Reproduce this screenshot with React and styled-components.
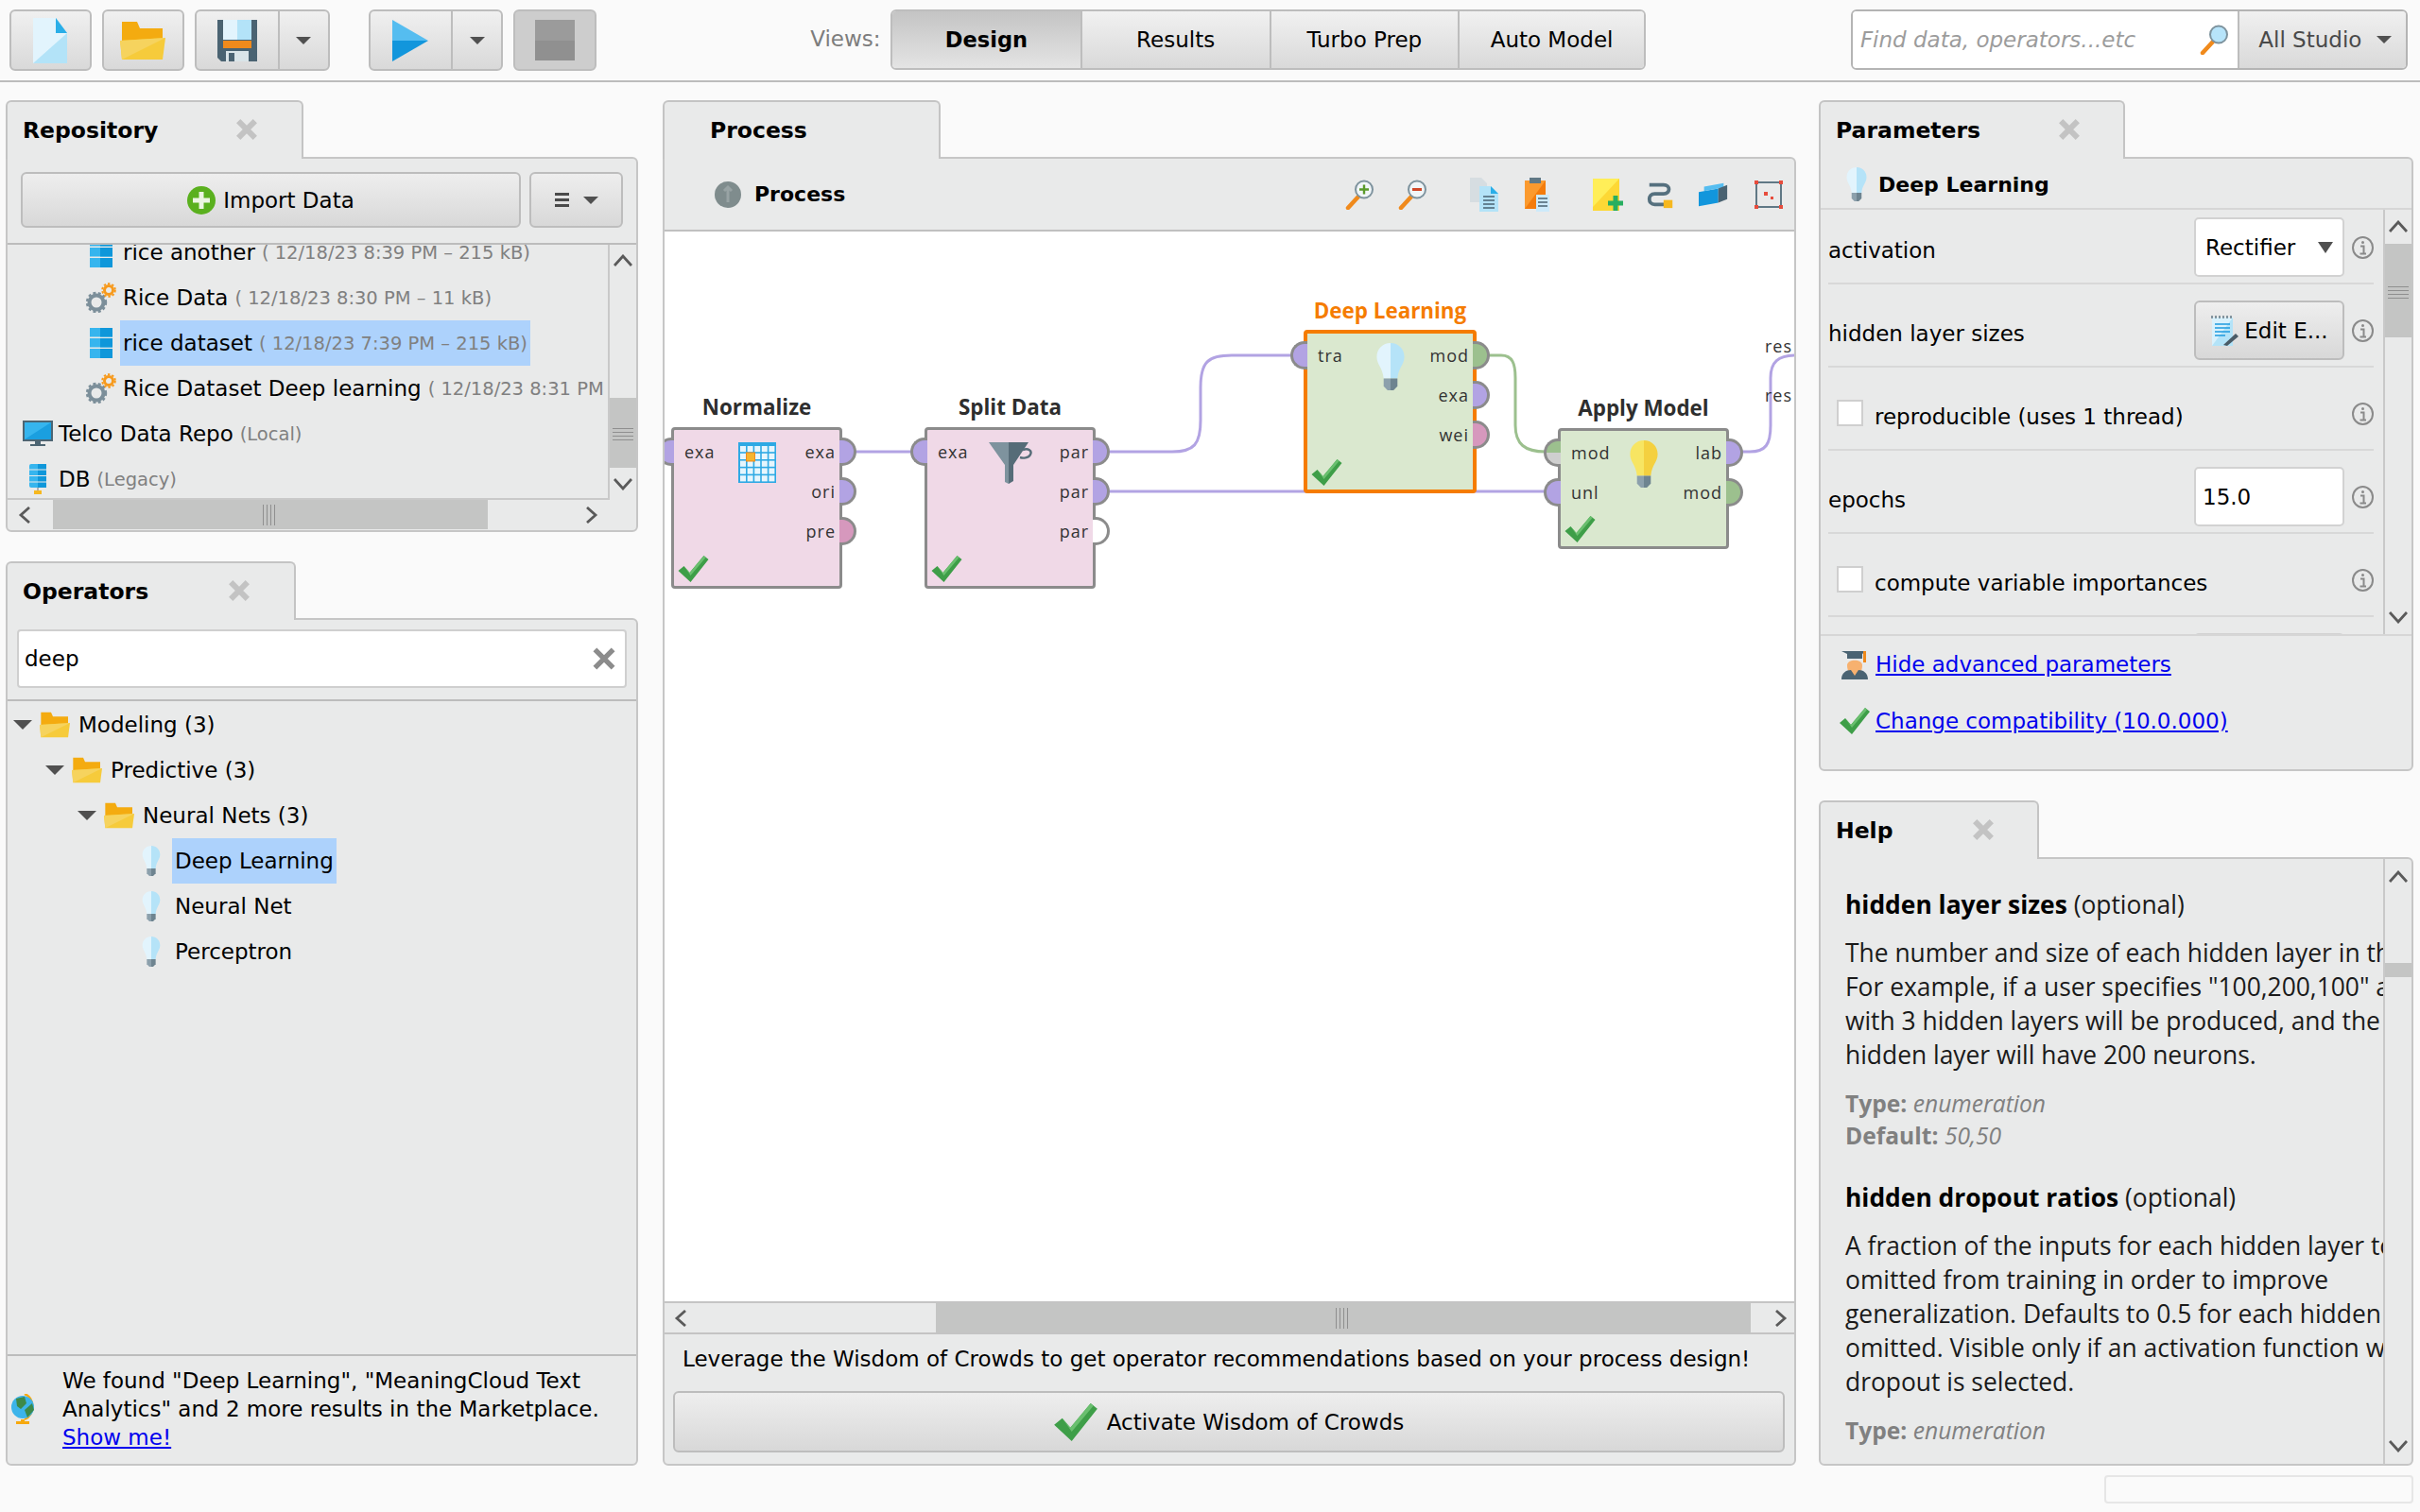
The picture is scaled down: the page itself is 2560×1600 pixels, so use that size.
import styled, { createGlobalStyle } from "styled-components";

const Global = createGlobalStyle`
  html, body { margin: 0; padding: 0; background: #fafafa; }
  #root { height: 1600px; overflow: hidden; }
  * { box-sizing: border-box; }
`;

const UI = `"DejaVu Sans", "Liberation Sans", sans-serif`;
const HELP = `"Open Sans", "DejaVu Sans", sans-serif`;

const Page = styled.div`
  display: flex;
  flex-direction: column;
  height: 1600px;
  font-family: ${UI};
  font-size: 23px;
  color: #000;
`;

/* ---------- toolbar ---------- */
const Toolbar = styled.div`
  display: flex;
  align-items: flex-start;
  height: 87px;
  flex-shrink: 0;
  padding: 10px 13px 0 10px;
  border-bottom: 2px solid #bcbcbc;
`;
const ToolGroup = styled.div`
  display: flex;
  margin-left: ${(p) => p.$gap || 0}px;
  height: 65px;
  border: 2px solid #bdbdbd;
  border-radius: 6px;
  overflow: hidden;
  background: ${(p) => (p.$disabled ? "#cdcdcd" : "linear-gradient(#f0f0f0, #d9d9d9)")};
`;
const ToolCell = styled.div`
  display: flex;
  align-items: center;
  justify-content: center;
  width: ${(p) => p.$w}px;
  & + & { border-left: 2px solid #bdbdbd; }
`;
const Caret = styled.span`
  display: inline-block;
  width: 0;
  height: 0;
  margin-left: ${(p) => p.$ml || 0}px;
  border-left: ${(p) => p.$s || 8}px solid transparent;
  border-right: ${(p) => p.$s || 8}px solid transparent;
  border-top: ${(p) => p.$tall || p.$s || 8}px solid #505050;
  flex-shrink: 0;
`;
const ViewsLabel = styled.span`
  margin-left: 226px;
  width: 85px;
  line-height: 62px;
  color: #7d7d7d;
`;
const ViewTabs = styled.div`
  display: flex;
  height: 64px;
  border: 2px solid #bdbdbd;
  border-radius: 6px;
  overflow: hidden;
`;
const ViewTab = styled.div`
  display: flex;
  align-items: center;
  justify-content: center;
  width: ${(p) => p.$w || 200}px;
  font-weight: ${(p) => (p.$active ? 700 : 400)};
  font-size: ${(p) => (p.$active ? "22.5px" : "23px")};
  background: ${(p) => (p.$active ? "linear-gradient(#c4c4c4, #e4e4e4)" : "linear-gradient(#f1f1f1, #d9d9d9)")};
  & + & { border-left: 2px solid #bdbdbd; }
`;
const SearchBox = styled.div`
  display: flex;
  margin-left: 217px;
  height: 64px;
  border: 2px solid #b4b4b4;
  border-radius: 6px;
  overflow: hidden;
`;
const SearchInput = styled.div`
  display: flex;
  align-items: center;
  justify-content: space-between;
  width: 408px;
  padding: 0 10px 0 8px;
  background: #fff;
  font-style: italic;
  color: #9c9c9c;
`;
const ScopeButton = styled.div`
  display: flex;
  align-items: center;
  width: 178px;
  padding-left: 20px;
  border-left: 2px solid #bdbdbd;
  color: #4a4a4a;
  background: linear-gradient(#f0f0f0, #d9d9d9);
`;

/* ---------- docks ---------- */
const Main = styled.div`
  display: flex;
  height: 1464px;
  padding: 19px 0 0 6px;
  flex-shrink: 0;
`;
const Column = styled.div`
  display: flex;
  flex-direction: column;
  width: ${(p) => p.$w}px;
  margin-left: ${(p) => p.$ml || 0}px;
  flex-shrink: 0;
`;
const Dock = styled.div`
  display: flex;
  flex-direction: column;
  min-height: 0;
  margin-top: ${(p) => p.$mt || 0}px;
  height: ${(p) => (p.$h ? `${p.$h}px` : "auto")};
  flex: ${(p) => (p.$h ? "none" : 1)};
`;
const Tab = styled.div`
  position: relative;
  z-index: 1;
  display: flex;
  align-items: center;
  width: ${(p) => p.$w}px;
  height: 62px;
  margin-bottom: -2px;
  padding: 0 0 0 ${(p) => p.$pl || 16}px;
  flex-shrink: 0;
  background: #e9eaea;
  border: 2px solid #c4c4c4;
  border-bottom: none;
  border-radius: 6px 6px 0 0;
  font-size: 23.5px;
  font-weight: 700;
`;
const TabClose = styled.span`
  position: absolute;
  left: ${(p) => p.$x}px;
  top: 18px;
  display: flex;
`;
const Panel = styled.div`
  display: flex;
  flex-direction: column;
  flex: 1;
  min-height: 0;
  background: #e9eaea;
  border: 2px solid #c6c6c6;
  border-radius: 0 6px 6px 6px;
  overflow: hidden;
`;
const Button = styled.div`
  display: flex;
  align-items: center;
  justify-content: center;
  gap: ${(p) => p.$gap || 8}px;
  height: ${(p) => p.$h || 59}px;
  width: ${(p) => (p.$w ? `${p.$w}px` : "auto")};
  flex: ${(p) => (p.$w || p.$block ? "none" : 1)};
  background: linear-gradient(#eeeeee, #d8d8d8);
  border: 2px solid #bdbdbd;
  border-radius: 6px;
`;

/* ---------- scrollbars ---------- */
const VScroll = styled.div`
  display: flex;
  flex-direction: column;
  align-items: stretch;
  width: ${(p) => p.$w || 30}px;
  flex-shrink: 0;
  border-left: 2px solid #c9c9c9;
`;
const ArrowCell = styled.div`
  display: flex;
  align-items: center;
  justify-content: center;
  height: ${(p) => p.$h || 34}px;
  width: ${(p) => (p.$w ? `${p.$w}px` : "auto")};
  padding-left: ${(p) => p.$pl || 0}px;
  flex-shrink: 0;
`;
const VTrack = styled.div`
  flex: 1;
  min-height: 0;
`;
const VThumb = styled.div`
  display: flex;
  align-items: center;
  justify-content: center;
  margin-top: ${(p) => p.$top}px;
  height: ${(p) => p.$h}px;
  background: #c4c5c4;
`;
const HScroll = styled.div`
  display: flex;
  align-items: stretch;
  height: ${(p) => p.$h || 31}px;
  padding-right: ${(p) => p.$pr || 0}px;
  flex-shrink: 0;
`;
const HTrack = styled.div`
  flex: 1;
  padding-left: ${(p) => p.$left}px;
  padding-right: ${(p) => p.$right}px;
`;
const HThumb = styled.div`
  display: flex;
  align-items: center;
  justify-content: center;
  height: 100%;
  background: #c4c5c4;
`;
const Grip = styled.span`
  display: block;
  width: ${(p) => (p.$vertical ? "16px" : "22px")};
  height: ${(p) => (p.$vertical ? "22px" : "16px")};
  background: repeating-linear-gradient(
    ${(p) => (p.$vertical ? "90deg" : "0deg")},
    #8f8f8f 0 1px,
    transparent 1px 4px
  );
`;

/* ---------- repository ---------- */
const ImportBar = styled.div`
  display: flex;
  gap: 9px;
  padding: 14px 14px 16px;
  border-bottom: 2px solid #bcbcbc;
`;
const TreeArea = styled.div`
  display: flex;
  height: 270px;
  flex-shrink: 0;
`;
const TreeClip = styled.div`
  flex: 1;
  min-width: 0;
  overflow: hidden;
  white-space: nowrap;
  border-bottom: 2px solid #c9c9c9;
`;
const RepoList = styled.div`
  margin-top: -16px;
`;
const RepoRow = styled.div`
  display: flex;
  align-items: center;
  height: 48px;
  padding-left: ${(p) => p.$indent}px;
`;
const IconSlot = styled.span`
  display: flex;
  align-items: center;
  justify-content: center;
  width: ${(p) => p.$w}px;
  flex-shrink: 0;
`;
const FolderSlot = styled.span`
  display: flex;
  align-items: center;
  width: 49px;
  padding-left: 8px;
  flex-shrink: 0;
`;
const LeafSlot = styled.span`
  display: flex;
  align-items: center;
  width: 32px;
  flex-shrink: 0;
`;
const RowLabel = styled.span`
  display: inline-flex;
  align-items: center;
  height: 48px;
  padding: 0 3px;
  background: ${(p) => (p.$selected ? "#add2fc" : "transparent")};
`;
const Meta = styled.span`
  margin-left: 7px;
  font-size: 19.5px;
  color: #808080;
`;

/* ---------- operators ---------- */
const FilterBox = styled.div`
  display: flex;
  align-items: center;
  justify-content: space-between;
  height: 62px;
  margin: 10px 10px 12px;
  padding: 0 10px 0 6px;
  background: #fff;
  border: 2px solid #cfcfcf;
  border-radius: 4px;
`;
const OperatorTree = styled.div`
  flex: 1;
  padding-top: 1px;
  border-top: 2px solid #bcbcbc;
`;
const OpRow = styled.div`
  display: flex;
  align-items: center;
  height: 48px;
  padding-left: ${(p) => p.$indent}px;
`;
const Marketplace = styled.div`
  display: flex;
  align-items: center;
  height: 116px;
  flex-shrink: 0;
  padding: 0 0 2px 4px;
  border-top: 2px solid #bcbcbc;
`;
const MarketText = styled.div`
  margin-left: 28px;
  line-height: 30px;
  white-space: nowrap;
`;
const Anchor = styled.a`
  color: #0000ee;
  text-decoration: underline;
`;

/* ---------- process ---------- */
const ProcessBar = styled.div`
  display: flex;
  align-items: center;
  height: 77px;
  flex-shrink: 0;
  padding: 0 0 0 52px;
  border-bottom: 2px solid #c0c0c0;
  font-size: 22px;
  font-weight: 700;
`;
const ProcessName = styled.span`
  margin-left: 13px;
`;
const ProcessActions = styled.div`
  flex: 1;
  display: flex;
  justify-content: flex-end;
  align-items: center;
  padding-right: 11px;
`;
const ActionIcon = styled.span`
  display: flex;
  justify-content: center;
  width: 32px;
  margin-left: ${(p) => p.$gap || 24}px;
`;
const Canvas = styled.div`
  position: relative;
  flex: 1;
  min-height: 0;
  background: #fff;
  overflow: hidden;
  border-bottom: 2px solid #c4c4c4;
`;
const Wires = styled.svg`
  position: absolute;
  left: 0;
  top: 0;
`;
const Node = styled.div`
  position: absolute;
  left: ${(p) => p.$x}px;
  top: ${(p) => p.$y}px;
  width: ${(p) => p.$w}px;
  height: ${(p) => p.$h}px;
  display: flex;
  justify-content: space-between;
  background: ${(p) => (p.$tone === "green" ? "#dae8cf" : "#f0d9e7")};
  border: ${(p) => (p.$selected ? "4px solid #f57c00" : "3px solid #8b8b8b")};
  border-radius: 4px;
  font-family: ${HELP};
  font-size: 18px;
  color: #333;
`;
const NodeTitle = styled.div`
  position: absolute;
  left: -30px;
  right: -30px;
  top: -37px;
  text-align: center;
  font-size: 22.4px;
  font-weight: 700;
  line-height: 26px;
  white-space: nowrap;
  color: ${(p) => (p.$selected ? "#f57c00" : "#2e2e2e")};
`;
const NodeIcon = styled.span`
  position: absolute;
  left: 50%;
  top: ${(p) => p.$top}px;
  transform: translateX(-50%);
  display: flex;
`;
const NodeCheck = styled.span`
  position: absolute;
  left: 4px;
  bottom: 4px;
  display: flex;
`;
const PortColumn = styled.div`
  display: flex;
  flex-direction: column;
  gap: 12px;
  padding-top: 8px;
  align-items: ${(p) => (p.$right ? "flex-end" : "flex-start")};
`;
const PortRow = styled.div`
  position: relative;
  display: flex;
  align-items: center;
  height: 30px;
  padding: ${(p) => (p.$right ? "0 4px 0 0" : "0 0 0 11px")};
  letter-spacing: 1px;
  line-height: 1;
`;
const Port = styled.span`
  position: absolute;
  top: 0;
  width: 18px;
  height: 30px;
  background: ${(p) => p.$fill};
  border: 3px solid #8b8b8b;
  ${(p) =>
    p.$right
      ? `left: 100%; border-left: none; border-radius: 0 15px 15px 0;`
      : `right: 100%; border-right: none; border-radius: 15px 0 0 15px;`}
`;
const ResLabel = styled.span`
  position: absolute;
  right: 2px;
  top: ${(p) => p.$top}px;
  font-family: ${HELP};
  font-size: 18px;
  color: #333;
  letter-spacing: 1px;
  line-height: 24px;
`;
const CrowdsBar = styled.div`
  display: flex;
  flex-direction: column;
  flex-shrink: 0;
  height: 139px;
  border-top: 2px solid #c4c4c4;
  padding: 0 10px 0 9px;
`;
const CrowdsText = styled.div`
  height: 60px;
  padding-left: 10px;
  line-height: 52px;
  white-space: nowrap;
`;

/* ---------- parameters ---------- */
const OperatorHeader = styled.div`
  display: flex;
  align-items: center;
  height: 54px;
  flex-shrink: 0;
  padding: 2px 0 0 27px;
  border-bottom: 2px solid #d6d6d6;
  font-size: 22px;
  font-weight: 700;
`;
const OperatorName = styled.span`
  margin-left: 12px;
`;
const ParamBody = styled.div`
  display: flex;
  height: 451px;
  flex-shrink: 0;
  border-bottom: 2px solid #d6d6d6;
`;
const ParamClip = styled.div`
  flex: 1;
  min-width: 0;
  overflow: hidden;
`;
const ParamList = styled.div`
  margin-top: -9px;
`;
const ParamRow = styled.div`
  display: flex;
  align-items: flex-start;
  height: 88px;
  margin: 0 10px 0 8px;
  padding-top: 17px;
  border-bottom: 2px solid #d8d8d8;
`;
const ParamLabel = styled.div`
  flex: 1;
  height: 63px;
  line-height: 70px;
`;
const Combo = styled.div`
  display: flex;
  align-items: center;
  justify-content: space-between;
  width: 159px;
  height: 63px;
  padding: 0 10px;
  background: #fff;
  border: 2px solid #d2d2d2;
  border-radius: 5px;
`;
const NumberField = styled(Combo)`
  padding: 0 7px;
`;
const Info = styled.span`
  display: flex;
  align-items: center;
  width: 23px;
  height: 63px;
  margin-left: 8px;
  flex-shrink: 0;
`;
const CheckBox = styled.span`
  display: block;
  width: 28px;
  height: 28px;
  margin: 17px 12px 0 9px;
  background: #fff;
  border: 2px solid #cfcfcf;
`;
const LinkRow = styled.div`
  display: flex;
  align-items: center;
  height: 60px;
  padding-left: 20px;
`;
const LinkIcon = styled.span`
  display: flex;
  justify-content: center;
  width: 32px;
  margin-right: 6px;
`;

/* ---------- help ---------- */
const HelpBody = styled.div`
  display: flex;
  flex: 1;
  min-height: 0;
`;
const HelpClip = styled.div`
  flex: 1;
  min-width: 0;
  overflow: hidden;
  padding: 30px 0 0 26px;
  font-family: ${HELP};
  font-size: 26.4px;
  white-space: nowrap;
  color: #1a1a1a;
`;
const HelpHeading = styled.div`
  line-height: 36px;
  margin-top: ${(p) => p.$mt || 0}px;
  b { color: #000; }
`;
const HelpPara = styled.div`
  margin-top: 15px;
  line-height: 36px;
`;
const HelpMeta = styled.div`
  margin-top: 17px;
  font-size: 24.6px;
  line-height: 34px;
  color: #808080;
  b { font-weight: 700; }
  i { font-style: italic; }
`;
const StatusRow = styled.div`
  display: flex;
  justify-content: flex-end;
  padding: 10px 7px 0 0;
`;
const StatusBox = styled.div`
  width: 327px;
  height: 30px;
  border: 2px solid #e6e6e6;
  border-radius: 4px;
`;

/* ---------- drawings ---------- */
const Chevron = ({ dir }) => {
  const paths = {
    up: "M1 12 L10 2 L19 12",
    down: "M1 2 L10 12 L19 2",
    left: "M12 1 L3 9 L12 17",
    right: "M3 1 L12 9 L3 17",
  };
  const vertical = dir === "up" || dir === "down";
  return (
    <svg width={vertical ? 20 : 15} height={vertical ? 14 : 18} fill="none" stroke="#5a5a5a" strokeWidth="2.8">
      <path d={paths[dir]} />
    </svg>
  );
};

const CloseX = ({ size = 22, color = "#c3c3c3", sw = 5.5 }) => (
  <svg width={size} height={size} viewBox="0 0 20 20" stroke={color} strokeWidth={sw}>
    <path d="M2 2 L18 18 M18 2 L2 18" />
  </svg>
);

const NewFile = () => (
  <svg width="36" height="48" viewBox="0 0 36 48">
    <path d="M0 0 H24 L36 16 V48 H0 Z" fill="#b3e3f8" />
    <path d="M0 0 H24 V16 H36 L0 48 Z" fill="#e2f4fd" />
    <path d="M24 0 L36 16 H24 Z" fill="#29aee8" />
  </svg>
);

const OpenFolder = ({ w = 48, h = 40 }) => (
  <svg width={w} height={h} viewBox="0 0 48 40">
    <path d="M2 0 H18 L21 7 H45 V24 H2 Z" fill="#f4ab10" />
    <path d="M0 20 L48 17 L45 40 H2 Z" fill="#f6cb3b" />
    <path d="M0 20 L48 17 L2 40 Z" fill="#f6d35e" />
  </svg>
);

const Floppy = () => (
  <svg width="42" height="44" viewBox="0 0 42 44">
    <path d="M0 0 H42 V44 H4 L0 40 Z" fill="#4a6372" />
    <rect x="6" y="0" width="15" height="21" fill="#e2f4fd" />
    <rect x="21" y="0" width="15" height="21" fill="#b3e3f8" />
    <rect x="6" y="22" width="30" height="8" fill="#f08a1c" />
    <rect x="9" y="33" width="24" height="11" fill="#d9e4e8" />
    <rect x="12" y="35" width="6" height="9" fill="#4a6372" />
  </svg>
);

const Play = () => (
  <svg width="38" height="44" viewBox="0 0 38 44">
    <path d="M0 0 L38 22 H0 Z" fill="#55bdf0" />
    <path d="M0 44 L38 22 H0 Z" fill="#1296dc" />
  </svg>
);

const Stop = () => (
  <svg width="42" height="43" viewBox="0 0 42 43">
    <rect width="42" height="22" fill="#9b9b9b" />
    <rect y="22" width="42" height="21" fill="#909090" />
  </svg>
);

const Magnifier = ({ mark, fill = "#f1f6f8" }) => (
  <svg width="30" height="32" viewBox="0 0 30 32">
    <path d="M14 18 L3 30" stroke="#f08a1c" strokeWidth="4.5" strokeLinecap="round" />
    <circle cx="20" cy="10.5" r="9" fill={fill} stroke="#7e939e" strokeWidth="2" />
    {mark === "plus" && <path d="M20 5.5 V15.5 M15 10.5 H25" stroke="#5a9a2a" strokeWidth="2.4" />}
    {mark === "minus" && <path d="M15 10.5 H25" stroke="#d1492a" strokeWidth="3" />}
  </svg>
);

const PlusBadge = () => (
  <svg width="30" height="30" viewBox="0 0 30 30">
    <ellipse cx="15" cy="15" rx="15" ry="15" fill="#5ab01e" />
    <path d="M15 6 V24 M6 15 H24" stroke="#ecf5e2" strokeWidth="5" />
  </svg>
);

const Check = ({ w = 33, h = 28 }) => (
  <svg width={w} height={h} viewBox="0 0 32 28">
    <path d="M0 16 L6 11 L12 18 L27 0 L32 4 L13 28 Z" fill="#3e9e48" />
    <path d="M6 11 L12 18 L27 0 L29 2 L13 21 Z" fill="#6abf6f" />
  </svg>
);

const Bulb = ({ w = 28, h = 48, left = "#e2f4fd", right = "#b5e3f8" }) => (
  <svg width={w} height={h} viewBox="0 0 28 48">
    <path d="M14 0 C6 0 0 6 0 14 C0 22 6 25 7 36 H14 Z" fill={left} />
    <path d="M14 0 C22 0 28 6 28 14 C28 22 22 25 21 36 H14 Z" fill={right} />
    <path d="M7 36 H14 V48 H11 L7 44 Z" fill="#8ca0ac" />
    <path d="M21 36 H14 V48 H17 L21 44 Z" fill="#6e8490" />
  </svg>
);

const DataStack = ({ h = 32 }) => (
  <svg width="24" height={h} viewBox="0 0 24 32">
    <rect width="24" height="9.5" fill="#36b5ee" />
    <rect y="11" width="24" height="9.5" fill="#36b5ee" />
    <rect y="22" width="24" height="10" fill="#36b5ee" />
    <rect x="11" width="13" height="9.5" fill="#0f97da" />
    <rect x="11" y="11" width="13" height="9.5" fill="#0f97da" />
    <rect y="22" x="11" width="13" height="10" fill="#0f97da" />
  </svg>
);

const Gears = () => (
  <svg width="32" height="32" viewBox="0 0 32 32">
    <circle cx="11" cy="21" r="7.5" fill="none" stroke="#7c8f9a" strokeWidth="4" />
    <circle cx="11" cy="21" r="10" fill="none" stroke="#7c8f9a" strokeWidth="2.4" strokeDasharray="3 2.4" />
    <circle cx="24" cy="8" r="4.5" fill="none" stroke="#f79a1d" strokeWidth="3" />
    <circle cx="24" cy="8" r="6.8" fill="none" stroke="#f79a1d" strokeWidth="2" strokeDasharray="2.4 2" />
  </svg>
);

const Monitor = () => (
  <svg width="32" height="28" viewBox="0 0 32 28">
    <rect width="32" height="22" fill="#4d6573" />
    <rect x="2" y="2" width="28" height="18" fill="#1a9fe0" />
    <path d="M2 2 H30 L2 20 Z" fill="#36b5ee" />
    <rect x="13" y="22" width="6" height="3" fill="#4d6573" />
    <rect x="8" y="25" width="16" height="2" fill="#4d6573" />
  </svg>
);

const DbIcon = () => (
  <svg width="18" height="32" viewBox="0 0 18 32">
    <rect width="18" height="25" rx="2" fill="#36b5ee" />
    <rect x="9" width="9" height="25" fill="#0f97da" />
    <path d="M0 6 H18 M0 12.5 H18 M0 19 H18" stroke="#e9eaea" />
    <rect x="8.5" y="25" width="1" height="4" fill="#777" />
    <rect x="5" y="28" width="8" height="4" fill="#f6b81f" />
  </svg>
);

const Globe = () => (
  <svg width="26" height="32" viewBox="0 0 26 32">
    <path d="M14 0 C25 4 25 22 14 27" fill="none" stroke="#f6a90e" strokeWidth="2.4" />
    <circle cx="12" cy="14" r="12" fill="#3cb4ea" />
    <path d="M5 5 L14 3 L16 10 L10 16 L6 13 Z M14 17 L22 10 L24 17 L17 25 Z" fill="#3d8a4a" />
    <rect x="10" y="27" width="4" height="2" fill="#f6a90e" />
    <rect x="5" y="29" width="14" height="3" fill="#f6a90e" />
  </svg>
);

const InfoGlyph = () => (
  <svg width="23" height="24" viewBox="0 0 23 24" fill="none" stroke="#8a8a8a">
    <ellipse cx="11.5" cy="12" rx="10.5" ry="11" strokeWidth="2" />
    <circle cx="11.5" cy="6.5" r="1.5" fill="#8a8a8a" stroke="none" />
    <path d="M9 10.5 H12.5 V18 M8.5 18.5 H15" strokeWidth="2" />
  </svg>
);

const Notepad = () => (
  <svg width="30" height="32" viewBox="0 0 30 32">
    <rect x="2" y="2" width="22" height="30" fill="#b3e3f8" />
    <path d="M2 2 H24 L2 32 Z" fill="#d9f1fc" />
    <path d="M2 0 V3 M6 0 V3 M10 0 V3 M14 0 V3 M18 0 V3 M22 0 V3" stroke="#607885" strokeWidth="1.5" />
    <path d="M5 9 H21 M5 13 H21 M5 17 H21 M5 21 H16" stroke="#1e9ade" strokeWidth="1.6" />
    <path d="M14 31 L27 19 L30 22 L18 32 Z" fill="#4a5b66" />
  </svg>
);

const Graduate = () => (
  <svg width="28" height="32" viewBox="0 0 28 32">
    <path d="M6 17 C6 10 22 10 22 17 C22 24 18 28 14 28 C10 28 6 24 6 17 Z" fill="#f7b16f" />
    <path d="M0 2 H26 L22 5 V10 H6 V5 Z" fill="#4a6372" />
    <rect x="23" y="2" width="3" height="12" fill="#f08a1c" />
    <path d="M0 32 C0 25 5 22 10 22 L14 28 L18 22 C23 22 28 25 28 32 Z" fill="#4a6372" />
  </svg>
);

const Triangle = () => <Caret $s={10} />;

const GridIcon = () => (
  <svg width="40" height="43" viewBox="0 0 40 43">
    <rect width="40" height="43" fill="#2ea9e4" />
    <g fill="#e6f6fd">
      {[0, 1, 2, 3, 4].map((r) =>
        [0, 1, 2, 3, 4].map((c) => <rect key={`${r}${c}`} x={2 + c * 7.6} y={4 + r * 7.8} width="6" height="6.2" />)
      )}
    </g>
    <rect x="8.5" y="11" width="9" height="9" fill="#f6b52e" stroke="#f08a1c" />
  </svg>
);

const Funnel = () => (
  <svg width="46" height="44" viewBox="0 0 46 44">
    <path d="M0 0 H21 V44 L17 42 V24 Z" fill="#7e939e" />
    <path d="M21 0 H42 L26 24 V41 L21 44 Z" fill="#566c78" />
    <path d="M36 8 C42 6 46 9 44 13 C42 17 36 17 33 16" fill="none" stroke="#566c78" strokeWidth="2.4" />
  </svg>
);

const ProcessDot = () => (
  <svg width="30" height="30" viewBox="0 0 30 30">
    <circle cx="15" cy="15" r="14" fill="#7f8c8d" />
    <path d="M15 7 V23 M11 11 L15 7 L19 11" stroke="#98a3a4" strokeWidth="3" fill="none" />
  </svg>
);

const CopyDocs = () => (
  <svg width="30" height="36" viewBox="0 0 30 36">
    <path d="M0 0 H12 L18 6 V26 H0 Z" fill="#d6dde1" />
    <path d="M10 9 H22 L30 17 V36 H10 Z" fill="#b3e3f8" />
    <path d="M22 9 L30 17 H22 Z" fill="#29aee8" />
    <path d="M14 20 H26 M14 24 H26 M14 28 H26 M14 32 H26" stroke="#4a6372" strokeWidth="1.4" />
  </svg>
);

const Clipboard = () => (
  <svg width="26" height="36" viewBox="0 0 26 36">
    <rect y="3" width="22" height="30" fill="#f47c0c" />
    <path d="M0 3 H22 L0 33 Z" fill="#fb9a2e" />
    <rect x="5" y="0" width="12" height="6" fill="#607885" />
    <rect x="12" y="18" width="14" height="18" fill="#cdeafa" />
    <path d="M14 22 H24 M14 26 H24 M14 30 H24" stroke="#4a6372" strokeWidth="1.4" />
  </svg>
);

const NoteAdd = () => (
  <svg width="32" height="34" viewBox="0 0 32 34">
    <rect width="28" height="34" fill="#fdd835" />
    <path d="M0 0 H28 L0 30 Z" fill="#ffee58" />
    <path d="M24 18 V34 M16 26 H32" stroke="#27ae60" strokeWidth="5" />
  </svg>
);

const Wire = () => (
  <svg width="34" height="34" viewBox="0 0 34 34" fill="none">
    <path d="M4 6 H20 C28 6 28 16 20 16 H10 C2 16 2 28 10 28 H22" stroke="#55707e" strokeWidth="4" />
    <rect x="20" y="23" width="10" height="9" fill="#f6b81f" />
  </svg>
);

const Layers = () => (
  <svg width="34" height="30" viewBox="0 0 34 30">
    <path d="M0 12 L22 8 V24 L0 28 Z" fill="#1296dc" />
    <path d="M6 6 L28 2 V10 L22 11 V8 L6 11 Z" fill="#55bdf0" />
    <path d="M22 8 L32 4 V20 L22 24 Z" fill="#4a6372" />
  </svg>
);

const AutoFit = () => (
  <svg width="30" height="30" viewBox="0 0 30 30">
    <rect x="2" y="2" width="26" height="26" fill="none" stroke="#607885" strokeWidth="2" />
    <path d="M0 0 h4 v4 h-4 Z M26 0 h4 v4 h-4 Z M0 26 h4 v4 h-4 Z M26 26 h4 v4 h-4 Z" fill="#e74c3c" />
    <rect x="10" y="12" width="4" height="4" fill="#e74c3c" />
    <rect x="17" y="17" width="3" height="3" fill="#e74c3c" />
  </svg>
);

/* ---------- process graph data ---------- */
const PURPLE = "#b2a3e3";
const GREEN = "#9cc08e";
const PINK = "#d698bd";

const nodes = [
  {
    title: "Normalize", x: 7, y: 207, w: 181, h: 171, tone: "pink", icon: <GridIcon />, iconTop: 13,
    inputs: [["exa", PURPLE]],
    outputs: [["exa", PURPLE], ["ori", PURPLE], ["pre", PINK]],
  },
  {
    title: "Split Data", x: 275, y: 207, w: 181, h: 171, tone: "pink", icon: <Funnel />, iconTop: 13,
    inputs: [["exa", PURPLE]],
    outputs: [["par", PURPLE], ["par", PURPLE], ["par", "#fff"]],
  },
  {
    title: "Deep Learning", x: 676, y: 104, w: 183, h: 173, tone: "green", selected: true,
    icon: <Bulb w={30} h={50} />, iconTop: 10,
    inputs: [["tra", PURPLE]],
    outputs: [["mod", GREEN], ["exa", PURPLE], ["wei", PINK]],
  },
  {
    title: "Apply Model", x: 945, y: 208, w: 181, h: 128, tone: "green",
    icon: <Bulb w={30} h={50} left="#f7e562" right="#f4d03f" />, iconTop: 10,
    inputs: [["mod", `linear-gradient(${GREEN} 50%, #cfcfcf 50%)`], ["unl", PURPLE]],
    outputs: [["lab", PURPLE], ["mod", GREEN]],
  },
];

const wires = [
  ["M202 233 H262", PURPLE],
  ["M471 233 H537 C560 233 567 225 567 200 V165 C567 138 575 131 600 131 H663", PURPLE],
  ["M471 275 H932", PURPLE],
  ["M872 131 H885 C897 131 900 140 900 155 V205 C900 225 910 233 932 233", GREEN],
  ["M1140 233 H1148 C1165 233 1170 225 1170 205 V155 C1170 138 1178 131 1197 131", PURPLE],
];

const ProcessNode = ({ node }) => (
  <Node $x={node.x} $y={node.y} $w={node.w} $h={node.h} $tone={node.tone} $selected={node.selected}>
    <NodeTitle $selected={node.selected}>{node.title}</NodeTitle>
    <NodeIcon $top={node.iconTop}>{node.icon}</NodeIcon>
    <PortColumn>
      {node.inputs.map(([name, fill]) => (
        <PortRow key={name}>
          <Port $fill={fill} />
          {name}
        </PortRow>
      ))}
    </PortColumn>
    <PortColumn $right>
      {node.outputs.map(([name, fill], i) => (
        <PortRow key={i} $right>
          {name}
          <Port $right $fill={fill} />
        </PortRow>
      ))}
    </PortColumn>
    <NodeCheck>
      <Check />
    </NodeCheck>
  </Node>
);

const ParamControlRow = ({ label, children }) => (
  <ParamRow>
    <ParamLabel>{label}</ParamLabel>
    {children}
    <Info>
      <InfoGlyph />
    </Info>
  </ParamRow>
);

const ParamCheckRow = ({ label }) => (
  <ParamRow>
    <CheckBox />
    <ParamLabel>{label}</ParamLabel>
    <Info>
      <InfoGlyph />
    </Info>
  </ParamRow>
);

const VBar = ({ top, height, upH, downH }) => (
  <VScroll>
    <ArrowCell $h={upH}>
      <Chevron dir="up" />
    </ArrowCell>
    <VTrack>
      <VThumb $top={top} $h={height}>
        {height > 40 && <Grip />}
      </VThumb>
    </VTrack>
    <ArrowCell $h={downH}>
      <Chevron dir="down" />
    </ArrowCell>
  </VScroll>
);

export default function App() {
  return (
    <Page>
      <Global />
      <Toolbar>
        <ToolGroup>
          <ToolCell $w={83}>
            <NewFile />
          </ToolCell>
        </ToolGroup>
        <ToolGroup $gap={11}>
          <ToolCell $w={83}>
            <OpenFolder />
          </ToolCell>
        </ToolGroup>
        <ToolGroup $gap={11}>
          <ToolCell $w={86}>
            <Floppy />
          </ToolCell>
          <ToolCell $w={53}>
            <Caret />
          </ToolCell>
        </ToolGroup>
        <ToolGroup $gap={41}>
          <ToolCell $w={86}>
            <Play />
          </ToolCell>
          <ToolCell $w={53}>
            <Caret />
          </ToolCell>
        </ToolGroup>
        <ToolGroup $gap={11} $disabled>
          <ToolCell $w={84}>
            <Stop />
          </ToolCell>
        </ToolGroup>
        <ViewsLabel>Views:</ViewsLabel>
        <ViewTabs>
          <ViewTab $active $w={199}>Design</ViewTab>
          <ViewTab>Results</ViewTab>
          <ViewTab>Turbo Prep</ViewTab>
          <ViewTab $w={197}>Auto Model</ViewTab>
        </ViewTabs>
        <SearchBox>
          <SearchInput>
            Find data, operators...etc
            <Magnifier fill="#b7e4fa" />
          </SearchInput>
          <ScopeButton>
            All Studio
            <Caret $ml={16} />
          </ScopeButton>
        </SearchBox>
      </Toolbar>

      <Main>
        <Column $w={669}>
          <Dock $h={457}>
            <Tab $w={315}>
              Repository
              <TabClose $x={242}>
                <CloseX />
              </TabClose>
            </Tab>
            <Panel>
              <ImportBar>
                <Button>
                  <PlusBadge />
                  Import Data
                </Button>
                <Button $w={99} $gap={14}>
                  <svg width="16" height="16" viewBox="0 0 16 16" fill="#4a4a4a">
                    <rect y="0" width="15" height="3" />
                    <rect y="6" width="15" height="3" />
                    <rect y="12" width="15" height="3" />
                  </svg>
                  <Caret />
                </Button>
              </ImportBar>
              <TreeArea>
                <TreeClip>
                  <RepoList>
                    <RepoRow $indent={79}>
                      <IconSlot $w={40}><DataStack /></IconSlot>
                      <RowLabel>rice another<Meta>( 12/18/23 8:39 PM – 215 kB)</Meta></RowLabel>
                    </RepoRow>
                    <RepoRow $indent={79}>
                      <IconSlot $w={40}><Gears /></IconSlot>
                      <RowLabel>Rice Data<Meta>( 12/18/23 8:30 PM – 11 kB)</Meta></RowLabel>
                    </RepoRow>
                    <RepoRow $indent={79}>
                      <IconSlot $w={40}><DataStack /></IconSlot>
                      <RowLabel $selected>rice dataset<Meta>( 12/18/23 7:39 PM – 215 kB)</Meta></RowLabel>
                    </RepoRow>
                    <RepoRow $indent={79}>
                      <IconSlot $w={40}><Gears /></IconSlot>
                      <RowLabel>Rice Dataset Deep learning<Meta>( 12/18/23 8:31 PM</Meta></RowLabel>
                    </RepoRow>
                    <RepoRow $indent={13}>
                      <IconSlot $w={38}><Monitor /></IconSlot>
                      <RowLabel>Telco Data Repo<Meta>(Local)</Meta></RowLabel>
                    </RepoRow>
                    <RepoRow $indent={13}>
                      <IconSlot $w={38}><DbIcon /></IconSlot>
                      <RowLabel>DB<Meta>(Legacy)</Meta></RowLabel>
                    </RepoRow>
                  </RepoList>
                </TreeClip>
                <VBar top={128} height={74} upH={34} downH={34} />
              </TreeArea>
              <HScroll $pr={30}>
                <ArrowCell $h={31} $w={36}>
                  <Chevron dir="left" />
                </ArrowCell>
                <HTrack $left={12} $right={91}>
                  <HThumb>
                    <Grip $vertical />
                  </HThumb>
                </HTrack>
                <ArrowCell $h={31} $w={36}>
                  <Chevron dir="right" />
                </ArrowCell>
              </HScroll>
            </Panel>
          </Dock>

          <Dock $mt={31}>
            <Tab $w={307}>
              Operators
              <TabClose $x={234}>
                <CloseX />
              </TabClose>
            </Tab>
            <Panel>
              <FilterBox>
                deep
                <CloseX size={24} color="#8c8c8c" sw={4.5} />
              </FilterBox>
              <OperatorTree>
                <OpRow $indent={6}>
                  <Triangle />
                  <FolderSlot><OpenFolder w={32} h={28} /></FolderSlot>
                  Modeling (3)
                </OpRow>
                <OpRow $indent={40}>
                  <Triangle />
                  <FolderSlot><OpenFolder w={32} h={28} /></FolderSlot>
                  Predictive (3)
                </OpRow>
                <OpRow $indent={74}>
                  <Triangle />
                  <FolderSlot><OpenFolder w={32} h={28} /></FolderSlot>
                  Neural Nets (3)
                </OpRow>
                <OpRow $indent={142}>
                  <LeafSlot><Bulb w={20} h={32} /></LeafSlot>
                  <RowLabel $selected>Deep Learning</RowLabel>
                </OpRow>
                <OpRow $indent={142}>
                  <LeafSlot><Bulb w={20} h={32} /></LeafSlot>
                  <RowLabel>Neural Net</RowLabel>
                </OpRow>
                <OpRow $indent={142}>
                  <LeafSlot><Bulb w={20} h={32} /></LeafSlot>
                  <RowLabel>Perceptron</RowLabel>
                </OpRow>
              </OperatorTree>
              <Marketplace>
                <Globe />
                <MarketText>
                  We found "Deep Learning", "MeaningCloud Text
                  <br />
                  Analytics" and 2 more results in the Marketplace.
                  <br />
                  <Anchor>Show me!</Anchor>
                </MarketText>
              </Marketplace>
            </Panel>
          </Dock>
        </Column>

        <Column $w={1199} $ml={26}>
          <Dock>
            <Tab $w={294} $pl={48}>Process</Tab>
            <Panel>
              <ProcessBar>
                <ProcessDot />
                <ProcessName>Process</ProcessName>
                <ProcessActions>
                  <ActionIcon><Magnifier mark="plus" /></ActionIcon>
                  <ActionIcon><Magnifier mark="minus" /></ActionIcon>
                  <ActionIcon $gap={44}><CopyDocs /></ActionIcon>
                  <ActionIcon><Clipboard /></ActionIcon>
                  <ActionIcon $gap={43}><NoteAdd /></ActionIcon>
                  <ActionIcon><Wire /></ActionIcon>
                  <ActionIcon><Layers /></ActionIcon>
                  <ActionIcon $gap={26}><AutoFit /></ActionIcon>
                </ProcessActions>
              </ProcessBar>
              <Canvas>
                <Wires width="1195" height="1133" fill="none" strokeWidth="3">
                  {wires.map(([d, color]) => (
                    <path key={d} d={d} stroke={color} />
                  ))}
                </Wires>
                {nodes.map((node) => (
                  <ProcessNode key={node.title} node={node} />
                ))}
                <ResLabel $top={109}>res</ResLabel>
                <ResLabel $top={161}>res</ResLabel>
              </Canvas>
              <HScroll>
                <ArrowCell $h={31} $w={34}>
                  <Chevron dir="left" />
                </ArrowCell>
                <HTrack $left={253} $right={0}>
                  <HThumb>
                    <Grip $vertical />
                  </HThumb>
                </HTrack>
                <ArrowCell $h={31} $w={46} $pl={16}>
                  <Chevron dir="right" />
                </ArrowCell>
              </HScroll>
              <CrowdsBar>
                <CrowdsText>Leverage the Wisdom of Crowds to get operator recommendations based on your process design!</CrowdsText>
                <Button $h={65} $gap={10} $block>
                  <Check w={46} h={40} />
                  Activate Wisdom of Crowds
                </Button>
              </CrowdsBar>
            </Panel>
          </Dock>
        </Column>

        <Column $w={629} $ml={24}>
          <Dock $h={710}>
            <Tab $w={324}>
              Parameters
              <TabClose $x={252}>
                <CloseX />
              </TabClose>
            </Tab>
            <Panel>
              <OperatorHeader>
                <Bulb w={22} h={36} />
                <OperatorName>Deep Learning</OperatorName>
              </OperatorHeader>
              <ParamBody>
                <ParamClip>
                  <ParamList>
                    <ParamControlRow label="activation">
                      <Combo>
                        Rectifier
                        <Caret $tall={12} />
                      </Combo>
                    </ParamControlRow>
                    <ParamControlRow label="hidden layer sizes">
                      <Button $w={159} $h={63} $gap={6}>
                        <Notepad />
                        Edit E...
                      </Button>
                    </ParamControlRow>
                    <ParamCheckRow label="reproducible (uses 1 thread)" />
                    <ParamControlRow label="epochs">
                      <NumberField>15.0</NumberField>
                    </ParamControlRow>
                    <ParamCheckRow label="compute variable importances" />
                    <ParamControlRow>
                      <NumberField />
                    </ParamControlRow>
                  </ParamList>
                </ParamClip>
                <VBar top={0} height={99} upH={36} downH={36} />
              </ParamBody>
              <LinkRow>
                <LinkIcon><Graduate /></LinkIcon>
                <Anchor>Hide advanced parameters</Anchor>
              </LinkRow>
              <LinkRow>
                <LinkIcon><Check w={32} h={28} /></LinkIcon>
                <Anchor>Change compatibility (10.0.000)</Anchor>
              </LinkRow>
            </Panel>
          </Dock>

          <Dock $mt={31}>
            <Tab $w={233}>
              Help
              <TabClose $x={161}>
                <CloseX />
              </TabClose>
            </Tab>
            <Panel>
              <HelpBody>
                <HelpClip>
                  <HelpHeading><b>hidden layer sizes</b> (optional)</HelpHeading>
                  <HelpPara>
                    The number and size of each hidden layer in the
                    <br />
                    For example, if a user specifies "100,200,100" a
                    <br />
                    with 3 hidden layers will be produced, and the
                    <br />
                    hidden layer will have 200 neurons.
                  </HelpPara>
                  <HelpMeta>
                    <b>Type:</b> <i>enumeration</i>
                    <br />
                    <b>Default:</b> <i>50,50</i>
                  </HelpMeta>
                  <HelpHeading $mt={30}><b>hidden dropout ratios</b> (optional)</HelpHeading>
                  <HelpPara>
                    A fraction of the inputs for each hidden layer to
                    <br />
                    omitted from training in order to improve
                    <br />
                    generalization. Defaults to 0.5 for each hidden
                    <br />
                    omitted. Visible only if an activation function w
                    <br />
                    dropout is selected.
                  </HelpPara>
                  <HelpMeta>
                    <b>Type:</b> <i>enumeration</i>
                  </HelpMeta>
                </HelpClip>
                <VBar top={72} height={15} upH={38} downH={38} />
              </HelpBody>
            </Panel>
          </Dock>
        </Column>
      </Main>

      <StatusRow>
        <StatusBox />
      </StatusRow>
    </Page>
  );
}
